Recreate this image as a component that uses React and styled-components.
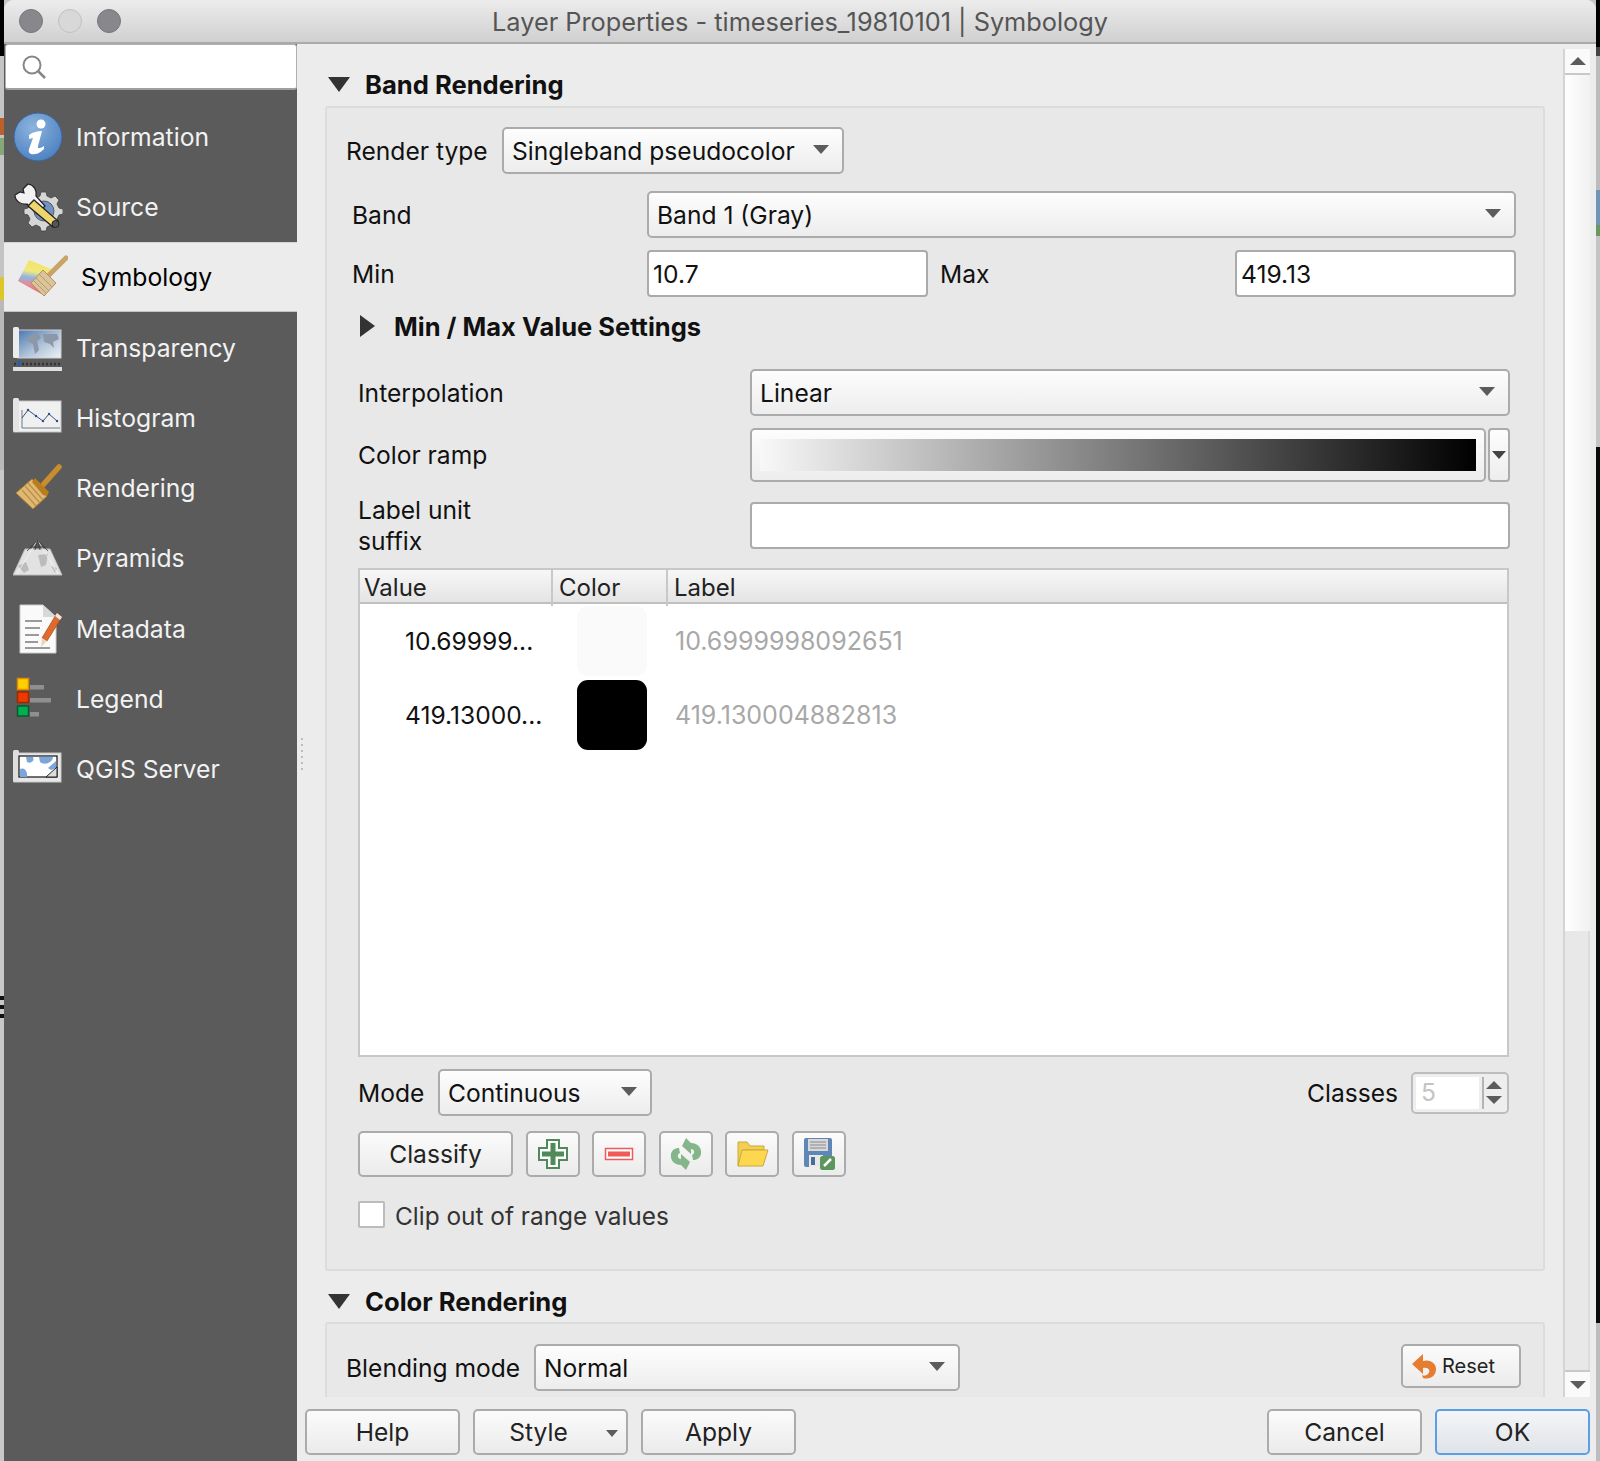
import React from "react";
import styled, { createGlobalStyle } from "styled-components";

const GlobalStyle = createGlobalStyle`
  html, body {
    margin: 0;
    padding: 0;
    background: #c4c4c4;
    font-family: Inter, "Liberation Sans", sans-serif;
  }
  * { box-sizing: border-box; }
`;

const Desktop = styled.div`
  width: 1600px;
  height: 1461px;
  padding: 0 4px;
  overflow: hidden;
  background:
    linear-gradient(to bottom, #000 0 56px, #c4c4c4 56px 118px, #b9602c 118px 135px, #c4c4c4 135px 138px,
      #86a878 138px 155px, #c4c4c4 155px 277px, #dcc62a 277px 300px, #b9b9b9 300px 470px, #c8c8c8 470px 996px,
      #111 996px 1000px, #c8c8c8 1000px 1005px, #111 1005px 1009px, #c8c8c8 1009px 1014px, #111 1014px 1018px,
      #c8c8c8 1018px) left top / 4px 100% no-repeat,
    linear-gradient(to bottom, #000 0 47px, #444 47px 56px, #bcbcbc 56px 190px, #6f94b8 190px 225px,
      #6d9560 225px 236px, #c4c4c4 236px 447px, #0a0a0a 447px 1323px, #bdbdbd 1323px) right top / 4px 100% no-repeat;
`;

const Window = styled.div`
  position: relative;
  width: 1592px;
  height: 1461px;
  display: flex;
  flex-direction: column;
  background: #ececec;
  border-radius: 10px 10px 0 0;
  overflow: hidden;
`;

const TitleBar = styled.div`
  height: 44px;
  flex: none;
  display: flex;
  align-items: center;
  padding-left: 15px;
  position: relative;
  background: linear-gradient(to bottom, #ececec, #d0d0d0);
  border-bottom: 2px solid #aaaaaa;
`;

const Light = styled.span`
  width: 24px;
  height: 24px;
  margin-right: 15px;
  border-radius: 50%;
  background: ${(p) => (p.$off ? "#d8d8d8" : "#88878c")};
  border: 1px solid ${(p) => (p.$off ? "#c0c0c0" : "#77767a")};
`;

const WindowTitle = styled.div`
  position: absolute;
  left: 0;
  right: 0;
  top: 7px;
  text-align: center;
  font-size: 25.3px;
  line-height: 30px;
  color: #555;
`;

const Body = styled.div`
  flex: 1;
  min-height: 0;
  display: flex;
`;

const Sidebar = styled.div`
  width: 293px;
  flex: none;
  background: #5b5b5b;
  display: flex;
  flex-direction: column;
`;

const SearchBox = styled.div`
  height: 46px;
  margin: 0 0 11.5px 1px;
  padding-left: 16px;
  display: flex;
  align-items: center;
  background: #fff;
  border: 1px solid #b0b0b0;
  border-bottom: 2px solid #a0a0a0;
  border-radius: 3px;
`;

const NavItem = styled.div`
  height: 70.3px;
  flex: none;
  display: flex;
  align-items: center;
  gap: 13px;
  padding-left: ${(p) => (p.$active ? "14px" : "9px")};
  font-size: 24.7px;
  color: ${(p) => (p.$active ? "#000" : "#f2f2f2")};
  background: ${(p) => (p.$active ? "#ececec" : "transparent")};
  border-top: ${(p) => (p.$active ? "1px solid #d4d4d4" : "0")};
  border-bottom: ${(p) => (p.$active ? "1px solid #c4c4c4" : "0")};
`;

const NavIcon = styled.svg`
  width: 50px;
  height: 50px;
  flex: none;
`;

const Grip = styled.div`
  position: absolute;
  left: 297px;
  top: 738px;
  width: 2px;
  height: 32px;
  background: repeating-linear-gradient(to bottom, #bdbdbd 0 2px, transparent 2px 6px);
`;

const Main = styled.div`
  flex: 1;
  min-width: 0;
  display: flex;
  flex-direction: column;
`;

const ScrollRegion = styled.div`
  flex: 1;
  min-height: 0;
  display: flex;
`;

const Content = styled.div`
  flex: 1;
  min-width: 0;
  overflow: hidden;
  padding-top: 21px;
`;

const SectionHeader = styled.div`
  height: ${(p) => p.$h || 40}px;
  margin-top: ${(p) => p.$top || 0}px;
  padding: 0 0 ${(p) => p.$lift || 0}px 31px;
  display: flex;
  align-items: center;
  gap: 15px;
  font-size: 25.6px;
  font-weight: 700;
  color: #111;
`;

const DownTriangle = styled.span`
  width: 0;
  height: 0;
  flex: none;
  border-left: ${(p) => p.$w / 2}px solid transparent;
  border-right: ${(p) => p.$w / 2}px solid transparent;
  border-top: ${(p) => p.$h}px solid ${(p) => p.$color || "#333"};
`;

const RightTriangle = styled.span`
  width: 0;
  height: 0;
  flex: none;
  border-top: 11px solid transparent;
  border-bottom: 11px solid transparent;
  border-left: 15px solid #333;
`;

const GroupBox = styled.div`
  margin-left: 28px;
  width: 1220px;
  padding-bottom: ${(p) => p.$bottom || 0}px;
  background: #e8e8e8;
  border: 2px solid #dcdcdc;
  border-radius: 3px;
  font-size: 24.6px;
  color: #111;
`;

const Row = styled.div`
  display: flex;
  align-items: center;
  margin-top: ${(p) => p.$top || 0}px;
  padding: 0 ${(p) => p.$right || 0}px 0 ${(p) => p.$left || 0}px;
`;

const BandGrid = styled.div`
  display: grid;
  grid-template-columns: 283px 281px 283px 281px;
  gap: 12px;
  align-items: center;
  margin-top: 17px;
  padding-left: 25px;
`;

const Wide = styled.div`
  grid-column: 2 / 5;
`;

const Combo = styled.div`
  position: relative;
  height: ${(p) => p.$h || 47}px;
  width: ${(p) => (p.$w ? `${p.$w}px` : "100%")};
  flex: none;
  display: flex;
  align-items: center;
  padding-left: 8px;
  background: linear-gradient(to bottom, #fdfdfd, #ededed);
  border: 2px solid #ababab;
  border-radius: 5px;
  font-size: 24.6px;
  color: #111;
  &::after {
    content: "";
    position: absolute;
    right: ${(p) => p.$arrow || 13}px;
    top: 16px;
    border-left: 8px solid transparent;
    border-right: 8px solid transparent;
    border-top: 9px solid #5c5c5c;
  }
`;

const TextField = styled.div`
  height: 47px;
  display: flex;
  align-items: center;
  padding-left: 4px;
  background: #fff;
  border: 2px solid #ababab;
  border-radius: 4px;
  font-size: 24.6px;
  color: #111;
`;

const Collapsed = styled.div`
  height: 30px;
  margin-top: 14px;
  padding-left: 33px;
  display: flex;
  align-items: center;
  gap: 19px;
  font-weight: 700;
  font-size: 25.5px;
`;

const RampGrid = styled.div`
  display: grid;
  grid-template-columns: 392px 760px;
  grid-template-rows: 47px 54px 47px;
  row-gap: 12px;
  align-items: center;
  margin-top: 28px;
  padding-left: 31px;
`;

const TwoLine = styled.div`
  line-height: 30.5px;
  margin-top: 16px;
`;

const RampRow = styled.div`
  height: 54px;
  display: flex;
  gap: 2px;
`;

const RampBox = styled.div`
  flex: 1;
  padding: 9px 8px;
  background: linear-gradient(to bottom, #fdfdfd, #ededed);
  border: 2px solid #ababab;
  border-radius: 5px;
`;

const RampFill = styled.div`
  height: 100%;
  background: linear-gradient(to right, #f8f8f8, #000);
`;

const RampArrow = styled.div`
  width: 22px;
  display: flex;
  align-items: center;
  justify-content: center;
  background: linear-gradient(to bottom, #fdfdfd, #ededed);
  border: 2px solid #ababab;
  border-radius: 4px;
`;

const SuffixField = styled(TextField)`
  margin-top: 16px;
`;

const Table = styled.div`
  margin: 27px 0 0 31px;
  width: 1151px;
  height: 489px;
  background: #fff;
  border: 2px solid #c8c8c8;
`;

const TableHeader = styled.div`
  display: grid;
  grid-template-columns: 193px 115px 1fr;
  height: 34px;
  font-size: 24px;
  background: linear-gradient(to bottom, #f7f7f7, #e4e4e4);
  border-bottom: 2px solid #c0c0c0;
`;

const HeaderCell = styled.div`
  padding-left: ${(p) => p.$pad || 6}px;
  line-height: 36px;
  color: #222;
  border-right: ${(p) => (p.$last ? "0" : "2px solid #c8c8c8")};
`;

const TableRow = styled.div`
  display: grid;
  grid-template-columns: 193px 115px 1fr;
  height: 74px;
  align-items: center;
`;

const ValueCell = styled.div`
  padding-left: 45px;
  white-space: nowrap;
`;

const Swatch = styled.div`
  width: 70px;
  height: 70px;
  margin-left: 24px;
  border-radius: 11px;
  background: ${(p) => p.$color};
`;

const LabelCell = styled.div`
  padding-left: 7px;
  font-size: 25px;
  color: #a8a8a8;
`;

const Label = styled.span`
  white-space: nowrap;
  width: ${(p) => (p.$w ? `${p.$w}px` : "auto")};
  flex: none;
`;

const Spin = styled.div`
  width: 98px;
  height: 42px;
  margin-left: 13px;
  padding: 3px;
  display: flex;
  background: #eee;
  border: 2px solid #bdbdbd;
  border-radius: 5px;
`;

const SpinField = styled.div`
  width: 63px;
  padding-left: 5px;
  background: #fff;
  color: #c4c4c4;
  line-height: 30px;
`;

const SpinArrows = styled.div`
  flex: 1;
  margin-left: 3px;
  border-left: 2px solid #b4b4b4;
  display: flex;
  flex-direction: column;
  align-items: center;
  justify-content: center;
  gap: 7px;
`;

const UpTriangle = styled.span`
  width: 0;
  height: 0;
  border-left: 8px solid transparent;
  border-right: 8px solid transparent;
  border-bottom: 8px solid #5c5c5c;
`;

const Button = styled.div`
  position: relative;
  flex: none;
  width: ${(p) => p.$w || 155}px;
  height: ${(p) => p.$h || 46}px;
  display: flex;
  align-items: center;
  justify-content: center;
  padding-right: ${(p) => p.$pad || 0}px;
  font-size: ${(p) => p.$size || 24.6}px;
  color: #222;
  background: ${(p) => (p.$primary ? "linear-gradient(to bottom, #f4f5f7, #dfe3e8)" : "linear-gradient(to bottom, #fbfbfb, #ebebeb)")};
  border: 2px solid ${(p) => (p.$primary ? "#5a9fe6" : "#ababab")};
  border-radius: 5px;
`;

const StyleArrow = styled.span`
  position: absolute;
  right: 8px;
  top: 19px;
  border-left: 6px solid transparent;
  border-right: 6px solid transparent;
  border-top: 7px solid #5c5c5c;
`;

const ButtonRow = styled(Row)`
  gap: 12.5px;
`;

const Check = styled.span`
  width: 27px;
  height: 27px;
  margin-right: 10px;
  background: #fff;
  border: 2px solid #bcbcbc;
  border-radius: 2px;
`;

const Dim = styled.span`
  color: #333;
  padding-top: 3px;
  font-size: 24.4px;
`;

const ResetButton = styled(Button)`
  margin-left: auto;
  align-self: flex-start;
  gap: 5px;
  justify-content: flex-start;
  padding-left: 8px;
`;

const Scrollbar = styled.div`
  width: 27px;
  margin: 5px 6px 0 0;
  flex: none;
  display: flex;
  flex-direction: column;
  border-left: 2px solid #d4d4d4;
`;

const ScrollButton = styled.div`
  height: ${(p) => p.$h}px;
  flex: none;
  display: flex;
  align-items: center;
  justify-content: center;
  background: #fafafa;
  border-bottom: ${(p) => (p.$line ? "2px solid #c8c8c8" : "0")};
  border-top: ${(p) => (p.$top ? "2px solid #c8c8c8" : "0")};
`;

const Thumb = styled.div`
  height: 856px;
  flex: none;
  background: linear-gradient(to right, #fff, #f1f1f1);
`;

const Track = styled.div`
  flex: 1;
  background: #e8e8e8;
  border-right: 2px solid #dcdcdc;
`;

const BottomBar = styled.div`
  height: 64px;
  flex: none;
  display: flex;
  gap: 13px;
  padding: 12px 6px 0 8px;
  background: #ececec;
`;

const Spacer = styled.div`
  flex: 1;
`;

const ToolIcon = styled.svg`
  width: 34px;
  height: 34px;
`;

const InfoIcon = () => (
  <NavIcon viewBox="0 0 50 50">
    <defs>
      <radialGradient id="infoFill" cx="40%" cy="30%" r="75%">
        <stop offset="0" stopColor="#8db4de" />
        <stop offset="1" stopColor="#4b80c0" />
      </radialGradient>
    </defs>
    <circle cx="25" cy="25" r="24" fill="url(#infoFill)" stroke="#3c64a0" strokeWidth="1" />
    <circle cx="28" cy="12" r="4.5" fill="#fff" />
    <path d="M16 23 C20 20 24 19 29 19 L25 34 C24.500 37 26 37 31 34 L31 37 C26 42 21 43 18 42 C15.500 41 15.500 39 16 37 L20 26 L16 27 Z" fill="#fff" />
  </NavIcon>
);

const SourceIcon = () => (
  <NavIcon viewBox="0 0 50 50">
    <path
      d="M28 10 L33 10 L34 14 L38 16 L42 14 L46 18 L44 22 L46 26 L50 27 L50 32 L46 33 L44 37 L46 41 L42 45 L38 43 L34 45 L33 49 L28 49 L27 45 L23 43 L19 45 L15 41 L17 37 L15 33 L11 32 L11 27 L15 26 L17 22 L15 18 L19 14 L23 16 L27 14 Z"
      fill="#d6d6d6"
      stroke="#444"
      strokeWidth="0.800"
    />
    <circle cx="31" cy="29" r="10" fill="#6f94c4" stroke="#444" strokeWidth="0.800" />
    <path d="M15 2 L10 7 L11 11 L7 10 L2 13 C2 19 8 23 14 22 L24 32 L32 24 L23 14 C24 8 21 3 15 2 Z" fill="#f2f2f2" stroke="#222" strokeWidth="1.200" />
    <path d="M21 18 L45 39 L40 45 L15 24 Z" fill="#f0d56a" stroke="#222" strokeWidth="1.300" />
    <circle cx="42.500" cy="42" r="3.500" fill="#555" stroke="#222" />
  </NavIcon>
);

const SymbologyIcon = () => (
  <NavIcon viewBox="0 0 50 50">
    <defs>
      <linearGradient id="flagFill" x1="0.550" y1="0" x2="0.400" y2="1">
        <stop offset="0" stopColor="#f4e45e" />
        <stop offset="0.330" stopColor="#f0e880" />
        <stop offset="0.500" stopColor="#8fb6e4" />
        <stop offset="0.700" stopColor="#e88a96" />
        <stop offset="1" stopColor="#dd5c68" />
      </linearGradient>
    </defs>
    <polygon points="11,8 33,17 27,44 0,29" fill="url(#flagFill)" />
    <path d="M48 6 L30 24" stroke="#c8a468" strokeWidth="5" strokeLinecap="round" />
    <polygon points="25,18 38,31 26,44 13,31" fill="#dcc49a" stroke="#b09460" strokeWidth="1" />
    <path d="M21 22 L34 35 M18 26 L31 39 M16 29 L28 41" stroke="#b89c6c" strokeWidth="1" />
  </NavIcon>
);

const TransparencyIcon = () => (
  <NavIcon viewBox="0 0 50 50">
    <defs>
      <linearGradient id="mapFill" x1="0" y1="0" x2="1" y2="1">
        <stop offset="0" stopColor="#4a76ae" />
        <stop offset="0.550" stopColor="#b0c4da" />
        <stop offset="1" stopColor="#eef2f6" />
      </linearGradient>
    </defs>
    <rect x="5" y="7" width="43" height="28" fill="url(#mapFill)" stroke="#cfcfcf" />
    <path d="M15 14 L25 10 L28 15 L24 18 L26 27 L22 31 L20 21 L14 18 Z M30 11 L44 11 L46 16 L40 19 L41 25 L37 21 L31 19 Z" fill="#8c98a8" />
    <rect x="0" y="4" width="6" height="31" rx="1.500" fill="#ececec" />
    <path d="M1 41 H48" stroke="#333" strokeWidth="2.500" strokeDasharray="2 2" />
    <rect x="0" y="44" width="49" height="4" fill="#dedede" />
    <rect x="5" y="38" width="2.500" height="5" fill="#1f5fc0" />
  </NavIcon>
);

const HistogramIcon = () => (
  <NavIcon viewBox="0 0 50 50">
    <rect x="1" y="8" width="47" height="31" fill="#f0f0f0" stroke="#c4c4c4" />
    <rect x="0" y="5" width="6" height="34" rx="1.500" fill="#e4e4e4" />
    <path d="M9 17 V35 H47" fill="none" stroke="#6a7a8a" strokeWidth="1" />
    <polyline points="9,25 15,17 23,23 30,28 36,21 44,28" fill="none" stroke="#33557f" strokeWidth="1" />
    <circle cx="15" cy="17" r="1.200" fill="#2a4a90" />
    <circle cx="23" cy="23" r="1.200" fill="#2a4a90" />
    <circle cx="30" cy="28" r="1.200" fill="#2a4a90" />
    <circle cx="36" cy="21" r="1.200" fill="#2a4a90" />
    <circle cx="44" cy="28" r="1.200" fill="#2a4a90" />
  </NavIcon>
);

const BrushIcon = () => (
  <NavIcon viewBox="0 0 50 50">
    <path d="M46 4 L29 23" stroke="#c98d2e" strokeWidth="5.500" strokeLinecap="round" />
    <polygon points="19,16 34,33 20,46 3,30" fill="#dfb872" stroke="#b0802e" strokeWidth="1" />
    <polygon points="22,15 36,29 34,33 30,32 19,19" fill="#b97d20" />
    <path d="M15 20 L30 37 M12 23 L27 40 M9 27 L23 43" stroke="#ba8f48" strokeWidth="1.200" />
  </NavIcon>
);

const PyramidIcon = () => (
  <NavIcon viewBox="0 0 50 50">
    <polygon points="12,16 37,16 49,42 0,42" fill="#e2e2e2" stroke="#bdbdbd" />
    <path d="M5 33 L13 29 L16 37 L11 40 Z M25 22 L35 21 L33 32 L28 34 Z M38 33 L44 35 L42 40 Z" fill="#bcbcbc" />
    <path d="M24.500 7 L4 41 M24.500 7 L45 41" fill="none" stroke="#f4f4f4" strokeWidth="0.800" />
    <path d="M24.500 7 L14 18 M24.500 7 L35 18 M24.500 7 L22 17 M24.500 7 L27 17 M17 14 H32" fill="none" stroke="#3a3a3a" strokeWidth="0.800" />
  </NavIcon>
);

const MetadataIcon = () => (
  <NavIcon viewBox="0 0 50 50">
    <path d="M7 1 L30 1 L43 13 L43 49 L7 49 Z" fill="#fafafa" stroke="#ccc" />
    <path d="M30 1 L30 13 L43 13 Z" fill="#d8d8d8" />
    <path d="M12 17 H29 M12 24 H27 M12 31 H26 M12 38 H25 M12 44 H37" stroke="#9a9a9a" strokeWidth="2" />
    <polygon points="44,9 49,13 34,37 29,34" fill="#e0692c" stroke="#a8481c" strokeWidth="0.700" />
    <polygon points="29,34 34,37 28,43" fill="#e8d8b8" />
    <polygon points="44,9 49,13 47,16 42,12" fill="#e8e8e8" />
  </NavIcon>
);

const LegendIcon = () => (
  <NavIcon viewBox="0 0 50 50">
    <rect x="4.500" y="4.500" width="11" height="11" fill="#ffd000" stroke="#e08a00" strokeWidth="1.500" />
    <rect x="4.500" y="18" width="11" height="10.500" fill="#ee3a00" stroke="#a02800" strokeWidth="1.500" />
    <rect x="4.500" y="32" width="11" height="10" fill="#00b050" stroke="#0a5a30" strokeWidth="1.500" />
    <rect x="17" y="11" width="14" height="4.500" fill="#8f8f8f" />
    <rect x="17" y="24" width="21" height="4.500" fill="#8f8f8f" />
    <rect x="17" y="38" width="9" height="4.500" fill="#8f8f8f" />
  </NavIcon>
);

const ServerIcon = () => (
  <NavIcon viewBox="0 0 50 50">
    <rect x="1" y="9" width="47" height="29" fill="#e8e8e8" stroke="#c8c8c8" />
    <rect x="0" y="6" width="6" height="32" rx="1.500" fill="#dedede" />
    <rect x="6" y="12" width="38" height="21" fill="#fff" stroke="#111" strokeWidth="1.200" />
    <path d="M13 13 L20 13 C22 17 18 20 14 18 Z M26 13 L40 13 C40 18 32 22 27 18 Z M7 33 L7 25 C11 23 15 27 14 33 Z M35 24 L43 17 L43 24 L38 26 Z" fill="#7aa6dc" />
    <polygon points="33,33 44,23 44,33" fill="#dcdcdc" stroke="#222" strokeWidth="1" />
  </NavIcon>
);

const PlusIcon = () => (
  <ToolIcon viewBox="0 0 34 34">
    <path d="M11 3 H23 V11 H31 V23 H23 V31 H11 V23 H3 V11 H11 Z" fill="#fff" stroke="#4f8a58" strokeWidth="2" />
    <path d="M14.500 6 H19.500 V14.500 H28 V19.500 H19.500 V28 H14.500 V19.500 H6 V14.500 H14.500 Z" fill="#4f8a58" />
  </ToolIcon>
);

const MinusIcon = () => (
  <ToolIcon viewBox="0 0 34 34">
    <rect x="3.500" y="11.500" width="27" height="11" fill="#fff" stroke="#f05a5a" strokeWidth="1.500" />
    <rect x="6" y="14.500" width="22" height="5" fill="#f05a5a" />
  </ToolIcon>
);

const RefreshIcon = () => (
  <ToolIcon viewBox="0 0 34 34">
    <path d="M17 1 L22 6 C28 6 33 10 32 17 C31 21 28 23 24 23 L23 18 C26 17 26 12 22 12 L22 17 L13 9 Z" fill="#84b68a" />
    <path d="M17 33 L12 28 C6 28 1 24 2 17 C3 13 6 11 10 11 L11 16 C8 17 8 22 12 22 L12 17 L21 25 Z" fill="#84b68a" />
  </ToolIcon>
);

const FolderIcon = () => (
  <ToolIcon viewBox="0 0 34 34">
    <path d="M3 5 H12 L15 9 H29 V13 H8 L4 29 L3 29 Z" fill="#f2cf50" stroke="#c9a93e" strokeWidth="1" />
    <path d="M7 13 H33 L28 29 H3 Z" fill="#fdd84e" stroke="#c9a93e" strokeWidth="1" />
  </ToolIcon>
);

const SaveIcon = () => (
  <ToolIcon viewBox="0 0 34 34">
    <rect x="2" y="1" width="28" height="29" rx="2" fill="#5f87b5" />
    <rect x="6" y="2" width="20" height="12" fill="#d8d8d8" />
    <path d="M8 5 H24 M8 8 H24 M8 11 H24" stroke="#8a8a8a" strokeWidth="1" />
    <rect x="7" y="18" width="14" height="12" fill="#e8e8e8" />
    <rect x="9" y="20" width="4" height="8" fill="#4a6c98" />
    <rect x="18" y="19" width="15" height="14" rx="2.500" fill="#5a965e" />
    <path d="M22 29 L29 22" stroke="#fff" strokeWidth="2.500" />
  </ToolIcon>
);

const UndoIcon = () => (
  <svg width="26" height="26" viewBox="0 0 26 26">
    <path d="M12 1 L1 11 L12 21 L12 15 C18 14 20 18 17 21 C15 23 12 23 11 22 L12 25 C19 27 25 23 25 16 C25 10 19 6 12 8 Z" fill="#e57c30" />
  </svg>
);

const SearchIcon = () => (
  <svg width="24" height="24" viewBox="0 0 24 24" fill="none" stroke="#868686">
    <circle cx="10" cy="10" r="8.500" strokeWidth="2" />
    <path d="M16 16 L23 23" strokeWidth="2.500" />
  </svg>
);

const navItems = [
  { name: "Information", icon: InfoIcon },
  { name: "Source", icon: SourceIcon },
  { name: "Symbology", icon: SymbologyIcon, active: true },
  { name: "Transparency", icon: TransparencyIcon },
  { name: "Histogram", icon: HistogramIcon },
  { name: "Rendering", icon: BrushIcon },
  { name: "Pyramids", icon: PyramidIcon },
  { name: "Metadata", icon: MetadataIcon },
  { name: "Legend", icon: LegendIcon },
  { name: "QGIS Server", icon: ServerIcon },
];

const App = () => (
  <Desktop>
    <GlobalStyle />
    <Window>
      <TitleBar>
        <Light />
        <Light $off />
        <Light />
        <WindowTitle>Layer Properties - timeseries_19810101 | Symbology</WindowTitle>
      </TitleBar>
      <Body>
        <Sidebar>
          <SearchBox>
            <SearchIcon />
          </SearchBox>
          {navItems.map(({ name, icon: Icon, active }) => (
            <NavItem key={name} $active={active}>
              <Icon />
              {name}
            </NavItem>
          ))}
        </Sidebar>
        <Grip />
        <Main>
          <ScrollRegion>
            <Content>
              <SectionHeader $h={41} $lift={2}>
                <DownTriangle $w={22} $h={15} />
                Band Rendering
              </SectionHeader>
              <GroupBox $bottom={38}>
                <Row $top={19} $left={19}>
                  <Label $w={156}>Render type</Label>
                  <Combo $w={342}>Singleband pseudocolor</Combo>
                </Row>
                <BandGrid>
                  <Label>Band</Label>
                  <Wide>
                    <Combo>Band 1 (Gray)</Combo>
                  </Wide>
                  <Label>Min</Label>
                  <TextField>10.7</TextField>
                  <Label>Max</Label>
                  <TextField>419.13</TextField>
                </BandGrid>
                <Collapsed>
                  <RightTriangle />
                  Min / Max Value Settings
                </Collapsed>
                <RampGrid>
                  <Label>Interpolation</Label>
                  <Combo>Linear</Combo>
                  <Label>Color ramp</Label>
                  <RampRow>
                    <RampBox>
                      <RampFill />
                    </RampBox>
                    <RampArrow>
                      <DownTriangle $w={14} $h={8} $color="#444" />
                    </RampArrow>
                  </RampRow>
                  <TwoLine>
                    Label unit
                    <br />
                    suffix
                  </TwoLine>
                  <SuffixField />
                </RampGrid>
                <Table>
                  <TableHeader>
                    <HeaderCell $pad={4}>Value</HeaderCell>
                    <HeaderCell>Color</HeaderCell>
                    <HeaderCell $last>Label</HeaderCell>
                  </TableHeader>
                  <TableRow>
                    <ValueCell>10.69999...</ValueCell>
                    <Swatch $color="#fafafa" />
                    <LabelCell>10.6999998092651</LabelCell>
                  </TableRow>
                  <TableRow>
                    <ValueCell>419.13000...</ValueCell>
                    <Swatch $color="#000" />
                    <LabelCell>419.130004882813</LabelCell>
                  </TableRow>
                </Table>
                <Row $top={12} $left={31} $right={34}>
                  <Label $w={80}>Mode</Label>
                  <Combo $w={214}>Continuous</Combo>
                  <Spacer />
                  <Label>Classes</Label>
                  <Spin>
                    <SpinField>5</SpinField>
                    <SpinArrows>
                      <UpTriangle />
                      <DownTriangle $w={16} $h={8} $color="#5c5c5c" />
                    </SpinArrows>
                  </Spin>
                </Row>
                <ButtonRow $top={15} $left={31}>
                  <Button $w={155}>Classify</Button>
                  <Button $w={54}>
                    <PlusIcon />
                  </Button>
                  <Button $w={54}>
                    <MinusIcon />
                  </Button>
                  <Button $w={54}>
                    <RefreshIcon />
                  </Button>
                  <Button $w={54}>
                    <FolderIcon />
                  </Button>
                  <Button $w={54}>
                    <SaveIcon />
                  </Button>
                </ButtonRow>
                <Row $top={21} $left={31}>
                  <Check />
                  <Dim>Clip out of range values</Dim>
                </Row>
              </GroupBox>
              <SectionHeader $top={10} $h={41}>
                <DownTriangle $w={22} $h={15} />
                Color Rendering
              </SectionHeader>
              <GroupBox>
                <Row $top={20} $left={19} $right={22}>
                  <Label $w={188}>Blending mode</Label>
                  <Combo $w={426}>Normal</Combo>
                  <ResetButton $w={120} $h={44} $size={20}>
                    <UndoIcon />
                    Reset
                  </ResetButton>
                </Row>
                <Row $top={40} />
              </GroupBox>
            </Content>
            <Scrollbar>
              <ScrollButton $h={26} $line>
                <UpTriangle />
              </ScrollButton>
              <Thumb />
              <Track />
              <ScrollButton $h={27} $top>
                <DownTriangle $w={16} $h={8} $color="#5c5c5c" />
              </ScrollButton>
            </Scrollbar>
          </ScrollRegion>
          <BottomBar>
            <Button>Help</Button>
            <Button $pad={24}>
              Style
              <StyleArrow />
            </Button>
            <Button>Apply</Button>
            <Spacer />
            <Button>Cancel</Button>
            <Button $primary>OK</Button>
          </BottomBar>
        </Main>
      </Body>
    </Window>
  </Desktop>
);

export default App;
